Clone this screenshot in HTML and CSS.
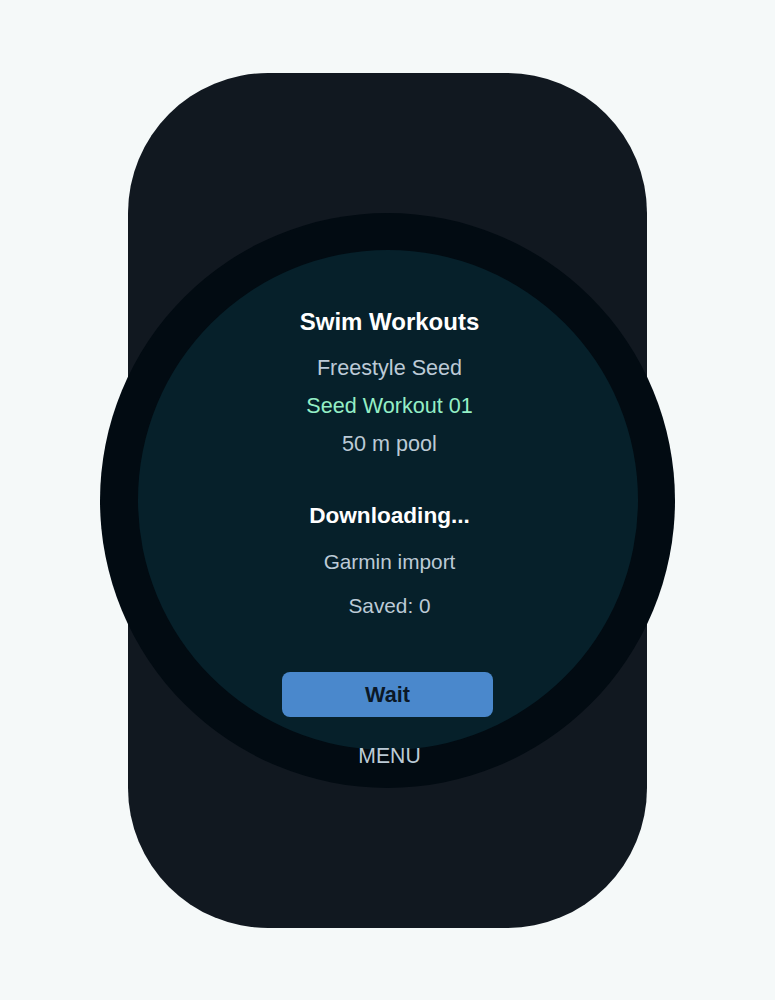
FILE: index.html
```html
<!DOCTYPE html>
<html lang="en">
<head>
    <meta charset="UTF-8">
    <meta name="viewport" content="width=device-width, initial-scale=1.0">
    <link rel="stylesheet" href="styles.css">
    <title>Swim Workouts</title>
</head>
<body>
    <div class="watch">
        <div class="face">
            <div class="screen">
                <h1 class="title">Swim Workouts</h1>
                <div class="workout">
                    <p>Freestyle Seed</p>
                    <p class="highlight">Seed Workout 01</p>
                    <p>50 m pool</p>
                </div>
                <h2 class="status">Downloading...</h2>
                <div class="details">
                    <p>Garmin import</p>
                    <p>Saved: 0</p>
                </div>
                <button class="wait-btn">Wait</button>
            </div>
            <div class="menu-label">MENU</div>
        </div>
    </div>
</body>
</html>
```

FILE: styles.css
```css
body {
    font-family: "Liberation Sans", Arial, sans-serif;
    margin: 0;
    padding: 0;
    background-color: #f5f9f9;
    min-height: 100vh;
    display: flex;
    align-items: center;
    justify-content: center;
}

.watch {
    width: 519px;
    height: 855px;
    border-radius: 140px;
    background-color: #111820;
    display: flex;
    align-items: center;
    justify-content: center;
}

.face {
    position: relative;
    flex-shrink: 0;
    width: 500px;
    height: 500px;
    padding: 37.5px;
    border-radius: 50%;
    background-color: #020b12;
}

.screen {
    width: 500px;
    height: 500px;
    border-radius: 50%;
    background-color: #06202a;
    display: flex;
    flex-direction: column;
    align-items: center;
    padding-top: 57px;
    box-sizing: border-box;
    text-align: center;
    text-indent: 4px;
}

.screen p {
    margin: 0;
}

.title {
    margin: 0;
    font-size: 24px;
    line-height: 30px;
    font-weight: bold;
    color: #ffffff;
}

.workout {
    margin-top: 12px;
    font-size: 21.6px;
    line-height: 38px;
    color: #bccad6;
}

.highlight {
    color: #94efc6;
}

.status {
    margin: 38px 0 0;
    font-size: 22.6px;
    line-height: 30px;
    font-weight: bold;
    color: #ffffff;
}

.details {
    margin-top: 9px;
    font-size: 20.8px;
    line-height: 44px;
    color: #bccad6;
}

.wait-btn {
    margin-top: 44px;
    width: 211px;
    height: 45px;
    border: none;
    border-radius: 8px;
    background-color: #4a88cc;
    color: #0b1826;
    font-family: inherit;
    font-size: 21.6px;
    font-weight: bold;
    text-indent: 0;
}

.menu-label {
    position: absolute;
    left: 0;
    right: 0;
    bottom: 21px;
    text-align: center;
    text-indent: 4px;
    font-size: 21.2px;
    line-height: 22px;
    color: #bccad6;
}
```
